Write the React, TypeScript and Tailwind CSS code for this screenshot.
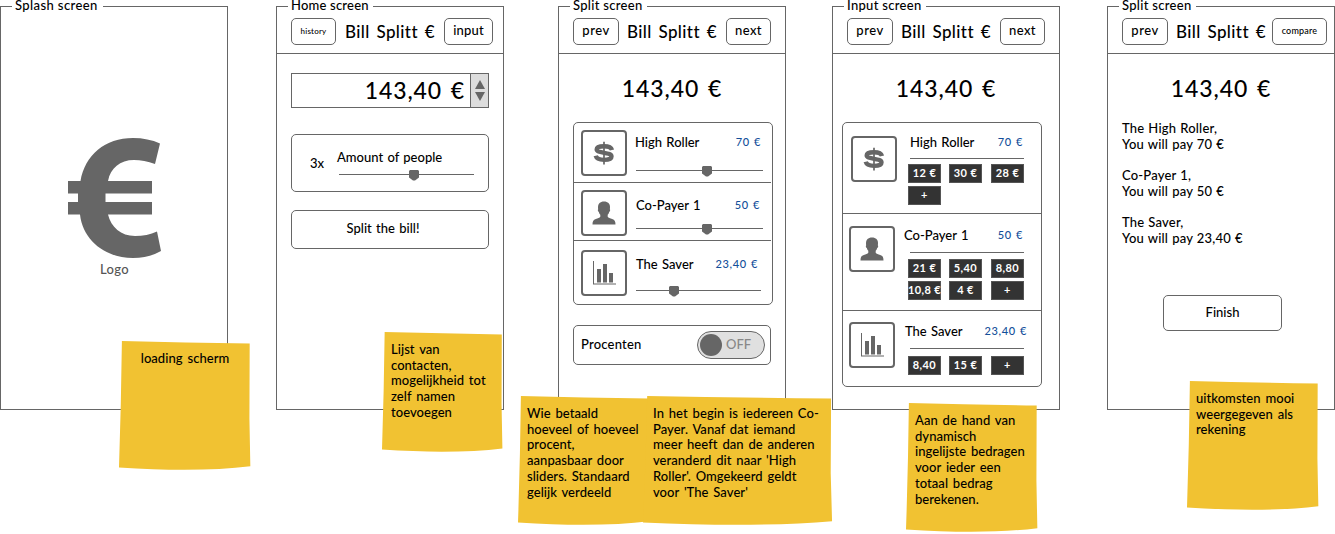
import React from "react";

function Screen({ title, gap, className, children }: { title: string; gap: string; className?: string; children: React.ReactNode }) {
  return (
    <section className={`relative flex h-[404px] w-[228px] shrink-0 flex-col border border-[#666] ${className ?? ""}`}>
      <h2 className={`absolute -top-[7px] left-[11px] h-[16px] bg-white pl-[3px] text-[13px] leading-[11px] whitespace-nowrap ${gap}`}>{title}</h2>
      {children}
    </section>
  );
}

function NavButton({ label, className }: { label: string; className: string }) {
  return (
    <button className={`flex h-[27px] shrink-0 items-center justify-center rounded-[5px] border border-[#666] pb-[2px] ${className}`}>{label}</button>
  );
}

function Header({ left, right }: { left: React.ReactNode; right: React.ReactNode }) {
  return (
    <header className="flex h-[47px] shrink-0 items-start border-b border-[#666] pt-[11px] pl-[14px]">
      <div className="w-[54px] shrink-0">{left}</div>
      <h1 className="h-[27px] w-[88px] shrink-0 text-[17px] leading-[27px] tracking-[0.4px] [word-spacing:2px] whitespace-nowrap">Bill Splitt €</h1>
      {right}
    </header>
  );
}

const prev = <NavButton label="prev" className="w-[46px] text-[13px] tracking-[0.5px]" />;
const next = <NavButton label="next" className="ml-[11px] w-[45px] text-[13px] tracking-[0.4px]" />;

function Total() {
  return <div className="h-[68px] shrink-0 text-center text-[23px] leading-[68px] tracking-[0.9px] [word-spacing:2px]">143,40 €</div>;
}

function Slider({ width, thumb }: { width: string; thumb: string }) {
  return (
    <div className={`flex h-[11px] items-start ${width}`}>
      <div className="mt-[4px] h-px flex-1 bg-[#666]" />
      <svg viewBox="0 0 10 11" className="h-[11px] w-[10px] shrink-0 fill-[#666]">
        <path d="M1 0h8l1 1v6.500L6 10.500H4L0 7.500V1z" />
      </svg>
      <div className={`mt-[4px] h-px bg-[#666] ${thumb}`} />
    </div>
  );
}

function Dollar() {
  return (
    <svg viewBox="0 0 24 24" className="size-6" fill="none" stroke="#666">
      <path d="M20 9C19.200 6.200 16 5.200 12 5.200c-4.200 0-7.300 1-7.300 3.100 0 2.400 3.300 2.800 7.300 3.500 4.500.7 7.500 1.400 7.500 3.700 0 2.400-3.500 3.400-7.500 3.400-4.600 0-7.600-1.500-8.300-4.100" strokeWidth="4.400" />
      <path d="M12 .8v22.700" strokeWidth="1.700" />
    </svg>
  );
}

function Person() {
  return (
    <svg viewBox="0 0 24 24" className="size-6 fill-[#666]">
      <path d="M12 .5c4 0 6 2.300 6 5.700 0 1-.1 1.500-.2 2 .6.400.5 2.200-.6 2.700-.4 1.300-.8 2.200-1.500 2.900v2c.7 1.100 2.500 1.700 4.500 2.300 2.600.8 3.300 2.400 3.300 5.400H.5c0-3 .7-4.600 3.300-5.400 2-.6 3.800-1.200 4.500-2.300v-2c-.7-.7-1.100-1.600-1.500-2.900-1.100-.5-1.200-2.300-.6-2.700-.1-.5-.2-1-.2-2C6 2.800 8 .5 12 .5z" />
    </svg>
  );
}

function Chart() {
  return (
    <svg viewBox="0 0 24 24" className="size-6 fill-[#666]">
      <path d="M1 0h1v22.500h22v1H1zM5 8h4v13.500H5zM11 3h4v18.500h-4zM17 12h4v9.500h-4z" />
    </svg>
  );
}

function IconBox({ children, className }: { children: React.ReactNode; className: string }) {
  return <div className={`flex size-[46px] shrink-0 items-center justify-center rounded-[4px] border-2 border-[#666] ${className}`}>{children}</div>;
}

function NameRow({ name, amount, className }: { name: string; amount: string; className: string }) {
  return (
    <div className={`flex h-5 items-center justify-between whitespace-nowrap ${className}`}>
      <span className="text-[13px] [word-spacing:1px]">{name}</span>
      <span className="-mt-px text-[11px] tracking-[0.6px] [word-spacing:1px] text-[#134f9a]">{amount}</span>
    </div>
  );
}

function Chips({ items, className }: { items: string[]; className: string }) {
  return (
    <div className={`-ml-[2px] grid w-[116px] grid-cols-[41px_42px_33px] gap-y-[3px] ${className}`}>
      {items.map((t) => (
        <div key={t} className="flex h-[19px] w-[33px] items-center justify-center border border-[#555] bg-[#333] text-[11px] font-bold tracking-[0.4px] whitespace-nowrap text-white">
          {t}
        </div>
      ))}
    </div>
  );
}

function Note({ lines, box, text }: { lines: string[]; box: string; text?: string }) {
  return (
    <aside className={`absolute ${box}`}>
      <svg viewBox="0 0 100 100" preserveAspectRatio="none" className="absolute inset-0 size-full fill-[#f1c232]">
        <path d="M2.200 0Q50 1.200 99 2L98.800 60 99.500 97Q60 102 0 98Q1.600 50 2.200 0z" />
      </svg>
      <div className={`relative pt-[10px] text-[13px] leading-[15.7px] tracking-[0.05px] [word-spacing:1.5px] whitespace-nowrap ${text ?? "pl-[9px]"}`}>
        {lines.map((l) => (
          <div key={l}>{l}</div>
        ))}
      </div>
    </aside>
  );
}

export default function App() {
  return (
    <main className="relative h-[534px] w-[1335px] overflow-hidden bg-white font-['Lato',sans-serif] font-medium text-black">
      <div className="flex pt-[6px]">
        <Screen title="Splash screen" gap="w-[91px] tracking-[0.4px]">
          <div className="flex flex-col items-center pt-[131px]">
            <svg viewBox="0 0 94 120" className="ml-[2px] h-[120px] w-[94px] fill-[#666]">
              <path d="M92 5.500 87 26Q76 22 66 22C52 22 42.500 30 40 43H84V55.500H37.500V64H84V76.500H40C43 89 53 98 67 98Q79 98 89 93.500L93 113Q81 120 65 120C38 120 15 103 12 76.500H0V64H10V55.500H0V43H12.500C17 17 37 0 65 0Q80 0 92 5.500z" />
            </svg>
            <div className="mt-[3px] ml-px text-[13px] leading-4 tracking-[0.3px] text-[#555]">Logo</div>
          </div>
        </Screen>

        <Screen title="Home screen" gap="w-[85px] tracking-[0.2px]" className="ml-12">
          <Header
            left={<NavButton label="history" className="w-[45px] text-[8px] tracking-[0.2px]" />}
            right={<NavButton label="input" className="ml-[11px] w-[49px] text-[13px] tracking-[0.2px]" />}
          />
          <div className="mt-[19px] ml-[14px] flex h-[35px] w-[198px] border border-[#666]">
            <div className="flex-1 pr-[5px] text-right text-[23px] leading-[32px] tracking-[0.9px] [word-spacing:2px]">143,40 €</div>
            <div className="flex w-[18px] flex-col items-center justify-center gap-[3px] border-l border-[#666] bg-[#ddd]">
              <svg viewBox="0 0 10 9" className="h-[9px] w-[10px] fill-[#666]"><path d="M5 0l5 9H0z" /></svg>
              <svg viewBox="0 0 10 9" className="h-[9px] w-[10px] fill-[#666]"><path d="M5 9l5-9H0z" /></svg>
            </div>
          </div>
          <div className="mt-[26px] ml-[14px] flex h-[58px] w-[198px] rounded-[5px] border border-[#666]">
            <div className="w-[45px] pl-[18px] text-[13px] leading-[57px]">3x</div>
            <div className="pt-[12px]">
              <div className="h-5 text-[13px] leading-5 [word-spacing:1px] whitespace-nowrap">Amount of people</div>
              <div className="mt-[3px] ml-[2px]"><Slider width="w-[135px]" thumb="w-[55px]" /></div>
            </div>
          </div>
          <button className="mt-[18px] ml-[14px] h-[39px] w-[198px] rounded-[5px] border border-[#666] pr-[14px] pb-[2px] text-[13px] leading-[33px] [word-spacing:1px]">Split the bill!</button>
        </Screen>

        <Screen title="Split screen" gap="w-[77px] tracking-[0.3px]" className="ml-[54px]">
          <Header left={prev} right={next} />
          <Total />
          <div className="ml-[14px] h-[183px] w-[200px] shrink-0 rounded-[5px] border border-[#666]">
            <div className="flex h-[60px] w-[197px] border-b border-[#666] pl-[7px]">
              <IconBox className="mt-[7px]"><Dollar /></IconBox>
              <div className="ml-[9px] pt-[10px]">
                <NameRow name="High Roller" amount="70 €" className="-ml-px w-[126px]" />
                <div className="mt-[13px]"><Slider width="w-[127px]" thumb="w-[51px]" /></div>
              </div>
            </div>
            <div className="flex h-[58px] w-[197px] border-b border-[#666] pl-[7px]">
              <IconBox className="mt-[7px]"><Person /></IconBox>
              <div className="ml-[9px] pt-[13px]">
                <NameRow name="Co-Payer 1" amount="50 €" className="w-[124px]" />
                <div className="mt-[8px]"><Slider width="w-[127px]" thumb="w-[51px]" /></div>
              </div>
            </div>
            <div className="flex h-[63px] w-[197px] pl-[7px]">
              <IconBox className="mt-[9px]"><Chart /></IconBox>
              <div className="ml-[9px] pt-[14px]">
                <NameRow name="The Saver" amount="23,40 €" className="w-[122px]" />
                <div className="mt-[11px]"><Slider width="w-[125px]" thumb="w-[82px]" /></div>
              </div>
            </div>
          </div>
          <div className="mt-5 ml-[14px] flex h-10 w-[198px] items-center justify-between rounded-[5px] border border-[#666] pr-[5px] pl-[7px]">
            <span className="text-[13px] tracking-[0.2px]">Procenten</span>
            <div className="flex h-7 w-[68px] items-center gap-[4px] rounded-full border border-[#666] bg-[#e0e0e0] pl-[2px]">
              <div className="size-[22px] rounded-full bg-[#666]" />
              <span className="text-[13px] text-[#888]">OFF</span>
            </div>
          </div>
        </Screen>

        <Screen title="Input screen" gap="w-[82px] tracking-[0.3px]" className="ml-[46px]">
          <Header left={prev} right={next} />
          <Total />
          <div className="ml-[9px] h-[265px] w-[200px] shrink-0 rounded-[5px] border border-[#666]">
            <div className="flex h-[91px] border-b border-[#666] pl-[8px]">
              <IconBox className="mt-[13px]"><Dollar /></IconBox>
              <div className="ml-[13px] w-[114px] pt-[10px]">
                <NameRow name="High Roller" amount="70 €" className="w-[113px]" />
                <div className="mt-[5px] h-px bg-[#666]" />
                <Chips className="mt-[5px]" items={["12 €", "30 €", "28 €", "+"]} />
              </div>
            </div>
            <div className="flex h-[97px] border-b border-[#666] pl-[6px]">
              <IconBox className="mt-[12px]"><Person /></IconBox>
              <div className="ml-[15px] w-[114px] pt-[12px]">
                <NameRow name="Co-Payer 1" amount="50 €" className="-ml-[6px] w-[119px]" />
                <div className="mt-[6px] h-px bg-[#666]" />
                <Chips className="mt-[6px]" items={["21 €", "5,40", "8,80", "10,8 €", "4 €", "+"]} />
              </div>
            </div>
            <div className="flex pl-[6px]">
              <IconBox className="mt-[11px]"><Chart /></IconBox>
              <div className="ml-[15px] w-[114px] pt-[11px]">
                <NameRow name="The Saver" amount="23,40 €" className="-ml-[5px] w-[122px]" />
                <div className="mt-[6px] h-px bg-[#666]" />
                <Chips className="mt-[7px]" items={["8,40", "15 €", "+"]} />
              </div>
            </div>
          </div>
        </Screen>

        <Screen title="Split screen" gap="w-[77px] tracking-[0.3px]" className="ml-[47px]">
          <Header left={prev} right={<NavButton label="compare" className="ml-[8px] w-[55px] text-[9px] tracking-[0.2px]" />} />
          <Total />
          <div className="-mt-px flex flex-col gap-[15.7px] pl-[14px] text-[13px] leading-[15.7px] tracking-[0.2px] [word-spacing:0.5px] whitespace-nowrap">
            <p>The High Roller,<br />You will pay 70 €</p>
            <p>Co-Payer 1,<br />You will pay 50 €</p>
            <p>The Saver,<br />You will pay 23,40 €</p>
          </div>
          <button className="mt-[48px] ml-[55px] h-9 w-[119px] rounded-[5px] border border-[#666] pb-[2px] text-[13px] leading-[30px]">Finish</button>
        </Screen>
      </div>

      <Note box="left-[119px] top-[341px] h-[129px] w-[132px]" text="text-center" lines={["loading scherm"]} />
      <Note box="left-[382px] top-[332px] h-[120px] w-[121px]" text="pl-[9px]" lines={["Lijst van", "contacten,", "mogelijkheid tot", "zelf namen", "toevoegen"]} />
      <Note box="left-[518px] top-[396px] h-[129px] w-[132px]" text="pl-[9px]" lines={["Wie betaald", "hoeveel of hoeveel", "procent,", "aanpasbaar door", "sliders. Standaard", "gelijk verdeeld"]} />
      <Note box="left-[643px] top-[396px] h-[129px] w-[190px]" text="pl-[10px]" lines={["In het begin is iedereen Co-", "Payer. Vanaf dat iemand", "meer heeft dan de anderen", "veranderd dit naar 'High", "Roller'. Omgekeerd geldt", "voor 'The Saver'"]} />
      <Note box="left-[906px] top-[403px] h-[129px] w-[132px]" lines={["Aan de hand van", "dynamisch", "ingelijste bedragen", "voor ieder een", "totaal bedrag", "berekenen."]} />
      <Note box="left-[1187px] top-[381px] h-[129px] w-[132px]" lines={["uitkomsten mooi", "weergegeven als", "rekening"]} />
    </main>
  );
}
